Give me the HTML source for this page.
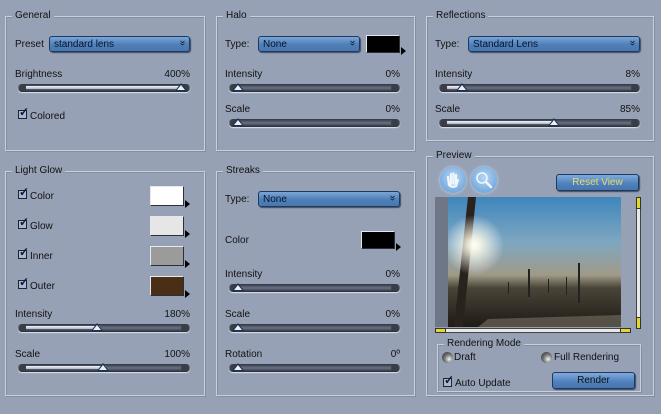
<!DOCTYPE html>
<html><head><meta charset="utf-8"><style>
*{box-sizing:border-box}
body{margin:0;width:661px;height:414px;background:#97a1b5;font-family:"Liberation Sans",sans-serif;font-size:10px;color:#111;position:relative;overflow:hidden}
.fs{position:absolute;border:1px solid #c9d0dc;box-shadow:inset 1px 1px 0 #848ea1,1px 1px 0 #848ea1}
.lg{position:absolute;background:#97a1b5;padding:0 3px;top:-7px;left:6px;font-size:10px;line-height:12px}
.t{position:absolute;white-space:nowrap;line-height:12px}
.r{text-align:right}
.dd{position:absolute;height:16px;border:1px solid #1d3a63;border-radius:3px;background:linear-gradient(#7ba6d6,#4f7fb9 55%,#4a78b0);box-shadow:1px 1px 1px #3d4a60;color:#06142b;padding-left:4px;line-height:16px}
.dd:after{content:"\00BB";position:absolute;right:4px;top:0;transform:rotate(90deg);font-size:10px;line-height:12px;color:#111}
.sl{position:absolute;height:8px;border-radius:4px;background:linear-gradient(#2f3442,#687184 50%,#262a35);box-shadow:0 1px 1px #dfe5ee}
.sl:before,.sl:after{content:"";position:absolute;top:1px;width:8px;height:6px;border-radius:3px;background:#3a3d44}
.sl:before{left:1px}.sl:after{right:1px}
.sl i{position:absolute;top:2px;height:3px;left:8px;background:linear-gradient(#f4f7fb,#aeb8c8)}
.th{position:absolute;top:-1px;width:0;height:0;border-left:6px solid transparent;border-right:6px solid transparent;border-bottom:8px solid #1e3150;z-index:2}
.th:after{content:"";position:absolute;left:-4px;top:2px;border-left:4px solid transparent;border-right:4px solid transparent;border-bottom:5px solid #e9f0fa}
.cb{position:absolute;width:9px;height:9px;border:1px solid #223;background:#a9b7cf}
.cb:after{content:"\2713";position:absolute;left:0;top:-6px;font-size:12px;font-weight:bold;color:#0b1a3a}
.sw{position:absolute;width:34px;height:20px;border:1px solid #e4e8ef;border-right-color:#2b2f38;border-bottom-color:#2b2f38}
.sw:after{content:"";position:absolute;right:-7px;bottom:-3px;border-left:5px solid #000;border-top:4px solid transparent;border-bottom:4px solid transparent}
.btn{position:absolute;height:17px;border:1px solid #1d3a63;border-radius:3px;background:linear-gradient(#80aadb,#4f80bb 60%,#4875ad);box-shadow:1px 1px 1px #3d4a60;text-align:center;line-height:15px}
.circ{position:absolute;width:26px;height:26px;border-radius:50%;background:radial-gradient(circle at 50% 40%,#b6d5f5,#78acdf 70%,#8cb3dc);box-shadow:0 0 3px #c8dcf2}
.rad{position:absolute;width:11px;height:11px;border-radius:50%;background:radial-gradient(circle at 65% 65%,#f3f3f3,#777 45%,#222)}
</style></head><body>

<div class="fs" style="left:5px;top:16px;width:200px;height:135px"><div class="lg">General</div></div>
<div class="t" style="left:15px;top:39px">Preset</div>
<div class="dd" style="left:49px;top:36px;width:141px">standard lens</div>
<div class="t" style="left:15px;top:69px">Brightness</div>
<div class="t r" style="left:140px;top:69px;width:50px">400%</div>
<div class="sl" style="left:18px;top:84px;width:172px"><i style="width:158px"></i><div class="th" style="left:157px"></div></div>
<div class="cb" style="left:18px;top:110px"></div>
<div class="t" style="left:30px;top:111px">Colored</div>

<div class="fs" style="left:216px;top:16px;width:199px;height:135px"><div class="lg">Halo</div></div>
<div class="t" style="left:225px;top:39px">Type:</div>
<div class="dd" style="left:258px;top:36px;width:102px">None</div>
<div class="sw" style="left:366px;top:35px;background:#000;height:18px"></div>
<div class="t" style="left:225px;top:69px">Intensity</div>
<div class="t r" style="left:350px;top:69px;width:50px">0%</div>
<div class="sl" style="left:229px;top:84px;width:171px"><div class="th" style="left:3px"></div></div>
<div class="t" style="left:225px;top:104px">Scale</div>
<div class="t r" style="left:350px;top:104px;width:50px">0%</div>
<div class="sl" style="left:229px;top:119px;width:171px"><div class="th" style="left:3px"></div></div>

<div class="fs" style="left:426px;top:16px;width:228px;height:125px"><div class="lg">Reflections</div></div>
<div class="t" style="left:435px;top:39px">Type:</div>
<div class="dd" style="left:468px;top:36px;width:172px">Standard Lens</div>
<div class="t" style="left:435px;top:69px">Intensity</div>
<div class="t r" style="left:590px;top:69px;width:50px">8%</div>
<div class="sl" style="left:439px;top:84px;width:201px"><i style="width:16px"></i><div class="th" style="left:17px"></div></div>
<div class="t" style="left:435px;top:104px">Scale</div>
<div class="t r" style="left:590px;top:104px;width:50px">85%</div>
<div class="sl" style="left:439px;top:119px;width:201px"><i style="width:105px"></i><div class="th" style="left:109px"></div></div>

<div class="fs" style="left:5px;top:171px;width:200px;height:225px"><div class="lg">Light Glow</div></div>
<div class="cb" style="left:18px;top:190px"></div><div class="t" style="left:30px;top:191px">Color</div>
<div class="sw" style="left:150px;top:186px;background:#fff"></div>
<div class="cb" style="left:18px;top:220px"></div><div class="t" style="left:30px;top:221px">Glow</div>
<div class="sw" style="left:150px;top:216px;background:#e6e6e6"></div>
<div class="cb" style="left:18px;top:250px"></div><div class="t" style="left:30px;top:251px">Inner</div>
<div class="sw" style="left:150px;top:246px;background:#9b9b9b"></div>
<div class="cb" style="left:18px;top:280px"></div><div class="t" style="left:30px;top:281px">Outer</div>
<div class="sw" style="left:150px;top:276px;background:#4b2e16"></div>
<div class="t" style="left:15px;top:309px">Intensity</div>
<div class="t r" style="left:140px;top:309px;width:50px">180%</div>
<div class="sl" style="left:18px;top:324px;width:172px"><i style="width:74px"></i><div class="th" style="left:73px"></div></div>
<div class="t" style="left:15px;top:349px">Scale</div>
<div class="t r" style="left:140px;top:349px;width:50px">100%</div>
<div class="sl" style="left:18px;top:364px;width:172px"><i style="width:80px"></i><div class="th" style="left:79px"></div></div>

<div class="fs" style="left:216px;top:171px;width:199px;height:225px"><div class="lg">Streaks</div></div>
<div class="t" style="left:225px;top:194px">Type:</div>
<div class="dd" style="left:258px;top:191px;width:142px">None</div>
<div class="t" style="left:225px;top:235px">Color</div>
<div class="sw" style="left:361px;top:231px;background:#000;height:18px"></div>
<div class="t" style="left:225px;top:269px">Intensity</div>
<div class="t r" style="left:350px;top:269px;width:50px">0%</div>
<div class="sl" style="left:229px;top:284px;width:171px"><div class="th" style="left:3px"></div></div>
<div class="t" style="left:225px;top:309px">Scale</div>
<div class="t r" style="left:350px;top:309px;width:50px">0%</div>
<div class="sl" style="left:229px;top:324px;width:171px"><div class="th" style="left:3px"></div></div>
<div class="t" style="left:225px;top:349px">Rotation</div>
<div class="t r" style="left:350px;top:349px;width:50px">0º</div>
<div class="sl" style="left:229px;top:364px;width:171px"><div class="th" style="left:3px"></div></div>

<div class="fs" style="left:426px;top:156px;width:228px;height:240px"><div class="lg">Preview</div></div>
<div class="circ" style="left:440px;top:167px"></div>
<svg style="position:absolute;left:440px;top:167px" width="26" height="26" viewBox="0 0 26 26"><path d="M9 18 L8 10 M11 17 L11 7 M13.5 17 L13.5 6.5 M16 17 L16 8 M9 18 Q12 21 16 19 L18 13" stroke="#f2f7fd" stroke-width="2.2" fill="none" stroke-linecap="round"/></svg>
<div class="circ" style="left:471px;top:167px"></div>
<svg style="position:absolute;left:471px;top:167px" width="26" height="26" viewBox="0 0 26 26"><circle cx="11" cy="11" r="5" stroke="#f2f7fd" stroke-width="1.6" fill="none"/><path d="M15 15 L20 20" stroke="#f2f7fd" stroke-width="2.4" stroke-linecap="round"/></svg>
<div class="btn" style="left:556px;top:174px;width:83px;color:#e4e06a">Reset View</div>
<div style="position:absolute;left:435px;top:197px;width:186px;height:130px;background:#6f7787"></div>
<svg style="position:absolute;left:448px;top:197px" width="173" height="130" viewBox="0 0 173 130">
<defs><linearGradient id="sky" x1="0" y1="0" x2="0" y2="1"><stop offset="0" stop-color="#3e86bd"/><stop offset="0.35" stop-color="#7fa7c0"/><stop offset="0.6" stop-color="#a09a88"/><stop offset="0.7" stop-color="#4a4438"/><stop offset="1" stop-color="#1e1b16"/></linearGradient>
<radialGradient id="sun" cx="0.5" cy="0.5" r="0.5"><stop offset="0" stop-color="#fff"/><stop offset="0.2" stop-color="#fffbe8" stop-opacity="0.9"/><stop offset="1" stop-color="#fff" stop-opacity="0"/></radialGradient></defs>
<rect width="173" height="130" fill="url(#sky)"/>
<path d="M20 0 L28 0 L15 130 L6 130 Z" fill="#2a221c"/>
<circle cx="26" cy="48" r="30" fill="url(#sun)"/>
<path d="M40 122 L173 118 L173 130 L30 130 Z" fill="#6b6658" opacity="0.7"/>
<g fill="#222"><rect x="80" y="72" width="2" height="28"/><rect x="130" y="66" width="2" height="40"/><rect x="118" y="80" width="1" height="18"/><rect x="100" y="82" width="1" height="14"/><rect x="60" y="85" width="1" height="12"/></g>
</svg>
<div style="position:absolute;left:636px;top:197px;width:5px;height:132px;background:#e8e8e8;border:1px solid #444"></div>
<div style="position:absolute;left:636px;top:197px;width:5px;height:12px;background:#e4d82a;border:1px solid #333"></div>
<div style="position:absolute;left:636px;top:317px;width:5px;height:12px;background:#e4d82a;border:1px solid #333"></div>
<div style="position:absolute;left:435px;top:328px;width:196px;height:5px;background:#e8e8e8;border:1px solid #444"></div>
<div style="position:absolute;left:435px;top:328px;width:11px;height:5px;background:#e4d82a;border:1px solid #333"></div>
<div style="position:absolute;left:620px;top:328px;width:11px;height:5px;background:#e4d82a;border:1px solid #333"></div>

<div class="fs" style="left:437px;top:344px;width:204px;height:48px"><div class="lg">Rendering Mode</div></div>
<div class="rad" style="left:442px;top:352px"></div><div class="t" style="left:454px;top:352px">Draft</div>
<div class="rad" style="left:541px;top:352px"></div><div class="t" style="left:554px;top:352px">Full Rendering</div>
<div class="cb" style="left:443px;top:378px"></div><div class="t" style="left:455px;top:378px">Auto Update</div>
<div class="btn" style="left:552px;top:372px;width:83px">Render</div>
</body></html>
